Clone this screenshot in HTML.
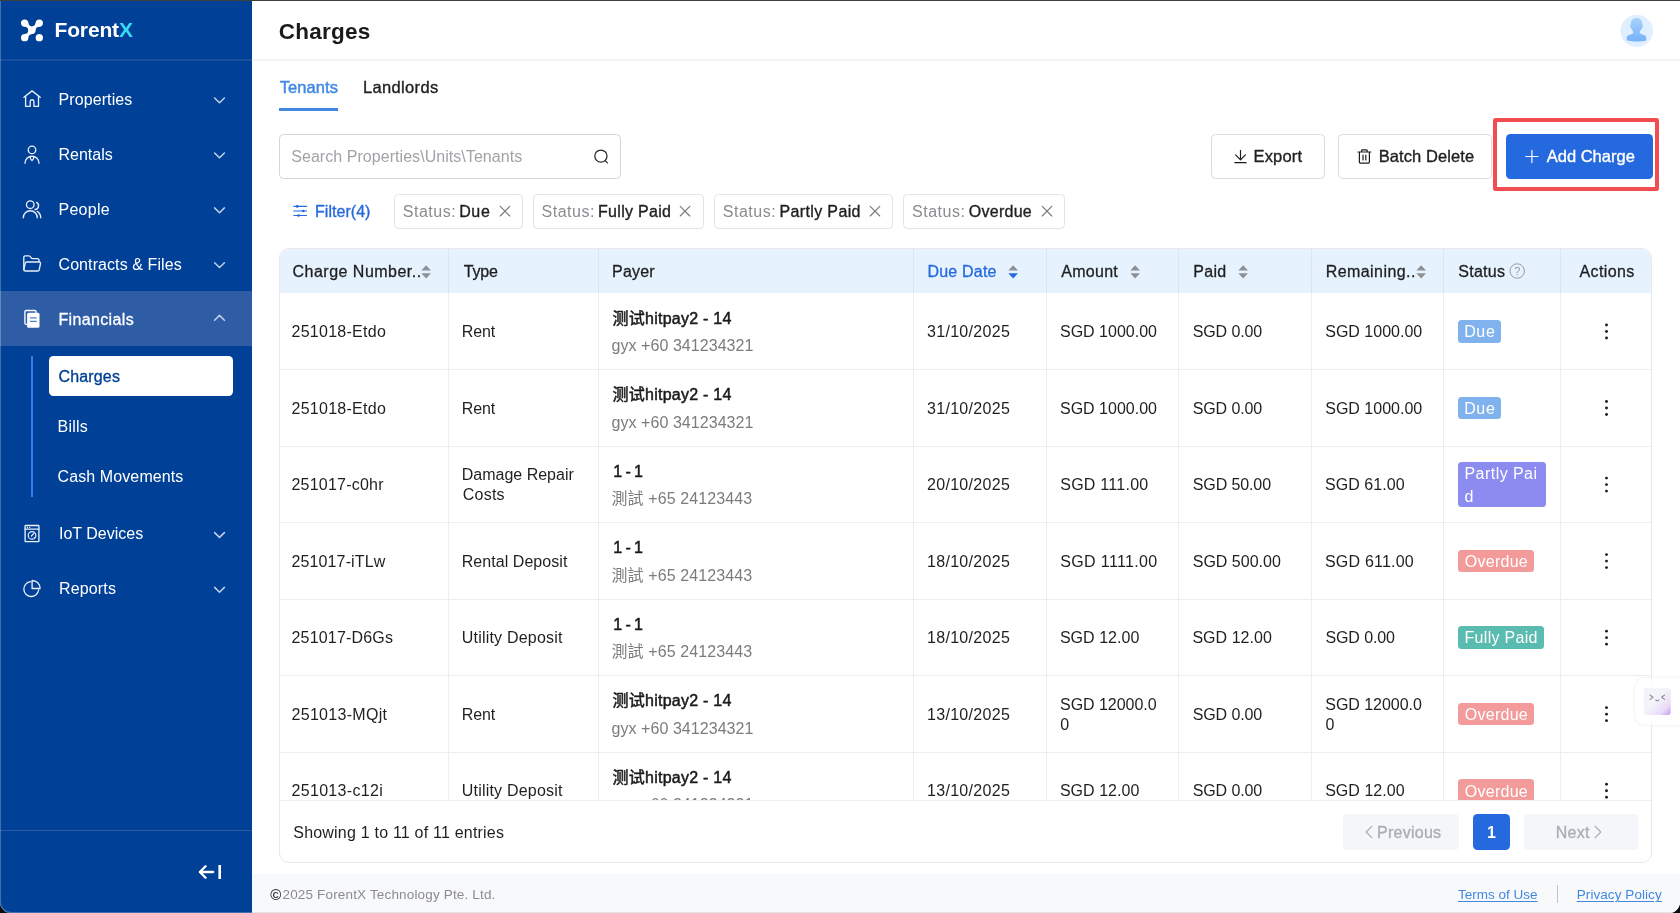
<!DOCTYPE html>
<html lang="en">
<head>
<meta charset="utf-8">
<title>Charges - ForentX</title>
<style>
*{box-sizing:border-box;margin:0;padding:0}
html,body{width:1680px;height:913px;overflow:hidden;background:#0c0c0c}
body{font-family:"Liberation Sans","Noto Sans CJK SC",sans-serif;color:#1f1f21;font-size:16px}
#win{position:absolute;left:0;top:0;width:1680px;height:913px;background:#fff;border-radius:0 0 11px 11px;overflow:hidden;will-change:transform}
#topline{position:absolute;left:0;top:0;width:1680px;height:1px;background:#3f3f3b}
#edge{position:absolute;left:0;top:1px;width:252px;height:912px;border-left:1px solid rgba(255,255,255,.25);border-bottom:1px solid rgba(255,255,255,.25);border-radius:0 0 0 11px;pointer-events:none}
.abs{position:absolute}
.tx{position:absolute;white-space:nowrap}
#side{position:absolute;left:0;top:0;width:251.5px;height:913px;background:#004096;overflow:hidden}
#card{border:1px solid #e9e9ed;border-radius:10px;background:#fff}
#clip{overflow:hidden}
</style>
</head>
<body>
<div id="win">
<div id="side">
<div class="abs" style="left:0px;top:291px;width:251.5px;height:55px;background:#2e5da6"></div>
<div class="abs" style="left:0px;top:59px;width:251.5px;height:2px;background:#1a4f9f"></div>
<div class="abs" style="left:0px;top:829.5px;width:251.5px;height:1px;background:#2b5ba6"></div>
<div class="abs" style="left:31.2px;top:355.5px;width:1.8px;height:141px;background:#2f80ee"></div>
<div class="abs" style="left:49.2px;top:355.5px;width:183.8px;height:40.7px;background:#fff;border-radius:4.5px"></div>
<svg class="abs" style="left:0;top:0" width="252" height="913" viewBox="0 0 252 913" fill="none" stroke="#e9eef8" stroke-width="1.35" stroke-linecap="round" stroke-linejoin="round">
<g fill="#fff" stroke="none">
<circle cx="24.65" cy="23.1" r="3.65"/><circle cx="39.3" cy="23.1" r="3.65"/><circle cx="24.65" cy="37.7" r="3.65"/><circle cx="39.3" cy="37.7" r="3.65"/>
<path d="M24.6 21 L28.2 22.6 C28.4 25 29.9 26.4 31.9 26.4 C33.9 26.4 35.5 25 35.8 22.6 L39.4 21 L40.4 26.5 C37 26.7 35.7 28 35.6 30.4 C35.5 32.6 34.4 33.7 32.3 33.9 C29.7 34.2 28.5 35.3 28.2 38 L23 38 L24.6 34.1 C27 33.9 28.2 32.6 28.2 30.4 C28.2 28.2 27 26.9 24.6 26.6 Z"/>
</g>
<!-- home -->
<path d="M23.9 97.3 L32.05 90.9 L40.2 97.3"/><path d="M25.6 96.4 V106.3 H30.2 V101.6 A1.85 1.85 0 0 1 33.9 101.6 V106.3 H38.5 V96.4"/>
<!-- rentals -->
<circle cx="32" cy="149.9" r="3.75"/><path d="M25 163.2 A7 7 0 0 1 39 163.2"/><path d="M30.4 157 V158.6 L32 160.6 L33.6 158.6 V157" stroke-width="1.2"/>
<!-- people -->
<circle cx="30.25" cy="204.7" r="3.8"/><path d="M23.3 217.7 A7 7 0 0 1 37.3 217.7"/><path d="M36.6 202.4 A3.8 3.8 0 0 1 35 209.5"/><path d="M37.2 211.4 A7.2 7.2 0 0 1 40.7 217.7"/>
<!-- folder -->
<path d="M23.8 269.5 V257.2 A1.4 1.4 0 0 1 25.2 255.8 H29.2 C30.4 255.8 31 258.6 32.6 258.6 H37.6 A1.4 1.4 0 0 1 39 260 V261.6"/><path d="M23.8 269.5 L25.3 263.2 A1.5 1.5 0 0 1 26.8 262 H39.4 A1.2 1.2 0 0 1 40.5 263.4 L39.2 269.8 A1.5 1.5 0 0 1 37.8 271 H25.3 A1.5 1.5 0 0 1 23.8 269.5 Z"/>
<!-- financials -->
<path d="M27.2 324.3 H26.2 A1.3 1.3 0 0 1 24.9 323 V311.8 A1.3 1.3 0 0 1 26.2 310.5 H34.8 A1.3 1.3 0 0 1 36.1 311.8 V312.6" stroke="#fff"/>
<rect x="27.1" y="312.8" width="12.4" height="14.9" rx="1.5" fill="#fff" stroke="none"/><path d="M30.3 317.8 H36.3 M30.3 321.4 H36.3" stroke="#5580c2" stroke-width="1.25"/>
<!-- iot -->
<rect x="25.1" y="525.5" width="13.8" height="16.1" rx="0.6"/><path d="M25.1 529.2 H38.9" stroke-width="1.2"/><circle cx="32.05" cy="535.4" r="3.8" stroke-width="1.2"/><path d="M31.4 536 L33.9 533.4" stroke-width="1.2"/><path d="M27.3 527.4 H27.5 M29.5 527.4 H29.7" stroke-width="1.1"/><circle cx="34.4" cy="537.6" r="0.7" fill="#e9eef8" stroke="none"/>
<!-- reports -->
<path d="M30.6 581.7 A7.4 7.4 0 1 0 38.6 590"/><path d="M32.1 580.5 V588.5 H40.1 A8 8 0 0 0 32.1 580.5 Z"/>
<!-- chevrons -->
<g stroke="#c3d0e8" stroke-width="1.5">
<path d="M214.6 98 L219.5 102.8 L224.4 98"/><path d="M214.6 153 L219.5 157.8 L224.4 153"/><path d="M214.6 207.9 L219.5 212.7 L224.4 207.9"/><path d="M214.6 262.7 L219.5 267.5 L224.4 262.7"/>
<path d="M214.6 320.2 L219.5 315.4 L224.4 320.2"/><path d="M214.6 532.6 L219.5 537.4 L224.4 532.6"/><path d="M214.6 587.4 L219.5 592.2 L224.4 587.4"/>
</g>
<!-- collapse -->
<g stroke="#fff" stroke-width="2.3"><path d="M200 872 H213.2 M205.6 866.2 L199.8 872 L205.6 877.8"/><path d="M219.7 865 V879" stroke-width="2.6" stroke-linecap="butt"/></g>
</svg>
<div class="tx" id="logo" style="left:54.50px;top:17.00px;font-size:21px;line-height:26px;color:#fff;letter-spacing:-0.150px;font-weight:bold;">Forent<b style="color:#38d9f5">X</b></div>
<div class="tx" id="m1" style="left:58.50px;top:90.00px;font-size:16px;line-height:20px;color:#fff;letter-spacing:0.100px;">Properties</div>
<div class="tx" id="m2" style="left:58.50px;top:145.00px;font-size:16px;line-height:20px;color:#fff;letter-spacing:0.000px;">Rentals</div>
<div class="tx" id="m3" style="left:58.50px;top:200.00px;font-size:16px;line-height:20px;color:#fff;letter-spacing:0.270px;">People</div>
<div class="tx" id="m4" style="left:58.50px;top:255.00px;font-size:16px;line-height:20px;color:#fff;letter-spacing:0.084px;">Contracts &amp; Files</div>
<div class="tx" id="m5" style="left:58.50px;top:310.00px;font-size:16px;line-height:20px;color:#fff;letter-spacing:0.350px;-webkit-text-stroke:0.3px #fff;">Financials</div>
<div class="tx" id="s1" style="left:58.50px;top:367.00px;font-size:16px;line-height:20px;color:#004096;letter-spacing:0.150px;-webkit-text-stroke:0.35px #004096;">Charges</div>
<div class="tx" id="s2" style="left:57.50px;top:417.00px;font-size:16px;line-height:20px;color:#fff;letter-spacing:0.225px;">Bills</div>
<div class="tx" id="s3" style="left:57.50px;top:467.00px;font-size:16px;line-height:20px;color:#fff;letter-spacing:0.106px;">Cash Movements</div>
<div class="tx" id="m6" style="left:59.00px;top:524.00px;font-size:16px;line-height:20px;color:#fff;letter-spacing:0.000px;">IoT Devices</div>
<div class="tx" id="m7" style="left:59.00px;top:579.00px;font-size:16px;line-height:20px;color:#fff;letter-spacing:0.150px;">Reports</div>
</div>
<div class="abs" style="left:251.5px;top:59px;width:1428.5px;height:2px;background:#f5f5f5"></div>
<div class="tx" id="h1" style="left:278.75px;top:18.00px;font-size:22.5px;line-height:28px;color:#1a1a1a;letter-spacing:0.227px;font-weight:bold;">Charges</div>
<svg class="abs" style="left:1620px;top:14px" width="34" height="34" viewBox="0 0 34 34"><defs><linearGradient id="ag" x1="0" y1="0" x2="0" y2="1"><stop offset="0" stop-color="#a9d2fe"/><stop offset="1" stop-color="#74b2f9"/></linearGradient><clipPath id="ac"><circle cx="16.7" cy="16.9" r="16.2"/></clipPath></defs><circle cx="16.7" cy="16.9" r="16.2" fill="#e0efff"/><g clip-path="url(#ac)"><path d="M16.5 4 C20 4 22.2 6.5 22.2 9.8 C22.2 10.8 22.8 11.3 22.9 12.2 C23 13.2 21.8 14.2 21 15.6 C20.2 17 19.8 17.3 19.8 18.6 C19.8 19.8 21 20.3 23.2 20.8 C25.6 21.3 26.2 22.6 26.2 24 V26 C26.2 27 22 27.4 16.5 27.4 C11 27.4 6.8 27 6.8 26 V24 C6.8 22.6 7.4 21.3 9.8 20.8 C12 20.3 13.2 19.8 13.2 18.6 C13.2 17.3 12.8 17 12 15.6 C11.2 14.2 10 13.2 10.1 12.2 C10.2 11.3 10.8 10.8 10.8 9.8 C10.8 6.5 13 4 16.5 4 Z" fill="url(#ag)"/></g></svg>
<div class="tx" id="tab1" style="left:279.75px;top:77.00px;font-size:16.5px;line-height:20px;color:#4288e2;letter-spacing:0.068px;-webkit-text-stroke:0.45px #4288e2;">Tenants</div>
<div class="abs" style="left:279.25px;top:108.3px;width:58.75px;height:2.5px;background:#4288e2"></div>
<div class="tx" id="tab2" style="left:363.00px;top:77.00px;font-size:16.5px;line-height:20px;color:#1f1f21;letter-spacing:0.337px;-webkit-text-stroke:0.35px #1f1f21;">Landlords</div>
<div class="abs" style="left:279.25px;top:134.25px;width:342px;height:44.5px;border:1px solid #d5d5db;border-radius:4.5px;background:#fff"></div>
<div class="tx" id="ph" style="left:291.25px;top:147.00px;font-size:16px;line-height:20px;color:#a2a2a7;letter-spacing:0.049px;">Search Properties\Units\Tenants</div>
<svg class="abs" style="left:590px;top:146px" width="22" height="22" viewBox="590 146 22 22" fill="none" stroke="#2b2b2d" stroke-width="1.25" stroke-linecap="round"><circle cx="600.9" cy="156.1" r="6.1"/><path d="M605.2 160.6 L607.4 162.9"/></svg>
<div class="abs" style="left:1210.5px;top:134.25px;width:114px;height:44.5px;border:1px solid #dadae2;border-radius:4.5px;background:#fff"></div>
<svg class="abs" style="left:1230px;top:146px" width="22" height="22" viewBox="1230 146 22 22" fill="none" stroke="#1f1f21" stroke-width="1.2" stroke-linecap="round" stroke-linejoin="round"><path d="M1240.5 150.4 V159.6 M1235.6 154.9 L1240.5 159.8 L1245.4 154.9 M1234.9 162.7 H1246.1"/></svg>
<div class="tx" id="b1" style="left:1253.50px;top:146.00px;font-size:16.5px;line-height:20px;color:#1f1f21;letter-spacing:0.180px;-webkit-text-stroke:0.35px #1f1f21;">Export</div>
<div class="abs" style="left:1338.25px;top:134.25px;width:153.25px;height:44.5px;border:1px solid #dadae2;border-radius:4.5px;background:#fff"></div>
<svg class="abs" style="left:1354px;top:146px" width="22" height="22" viewBox="1354 146 22 22" fill="none" stroke="#1f1f21" stroke-width="1.2" stroke-linecap="round" stroke-linejoin="round"><path d="M1358 152 H1370.8 M1361.6 152 V150.6 A0.8 0.8 0 0 1 1362.4 149.8 H1366.4 A0.8 0.8 0 0 1 1367.2 150.6 V152 M1359.4 152 V162 A1.2 1.2 0 0 0 1360.6 163.2 H1368.2 A1.2 1.2 0 0 0 1369.4 162 V152 M1363 155.2 V160 M1365.8 155.2 V160"/></svg>
<div class="tx" id="b2" style="left:1378.75px;top:146.00px;font-size:16.5px;line-height:20px;color:#1f1f21;letter-spacing:0.082px;-webkit-text-stroke:0.35px #1f1f21;">Batch Delete</div>
<div class="abs" style="left:1505.75px;top:133.75px;width:146.75px;height:45.5px;border-radius:4.5px;background:#2569de"></div>
<svg class="abs" style="left:1520px;top:146px" width="24" height="22" viewBox="1520 146 24 22" fill="none" stroke="#fff" stroke-width="1.2" stroke-linecap="round"><path d="M1531.9 150.4 V162.6 M1525.8 156.5 H1538"/></svg>
<div class="tx" id="b3" style="left:1546.75px;top:146.00px;font-size:16.5px;line-height:20px;color:#fff;letter-spacing:0.000px;-webkit-text-stroke:0.35px #fff;">Add Charge</div>
<div class="abs" style="left:1492.75px;top:118px;width:166.25px;height:72.5px;border:4px solid #f24d50;border-radius:2.5px"></div>
<svg class="abs" style="left:290px;top:202px" width="20" height="20" viewBox="290 202 20 20" fill="none" stroke="#2569de" stroke-width="1.15" stroke-linecap="round"><path d="M293.8 206.4 H306.6 M293.8 211 H306.6 M293.8 215.5 H306.6"/><g fill="#2569de" stroke="none"><circle cx="297.2" cy="206.4" r="1.35"/><circle cx="303.3" cy="211" r="1.35"/><circle cx="298.6" cy="215.5" r="1.35"/></g></svg>
<div class="tx" id="flt" style="left:315.05px;top:202.00px;font-size:16px;line-height:20px;color:#2569de;letter-spacing:0.032px;-webkit-text-stroke:0.35px #2569de;">Filter(4)</div>
<div class="abs" style="left:393.5px;top:193.75px;width:129px;height:35.5px;border:1px solid #e2e2e8;border-radius:4.5px;background:#fff"></div>
<div class="tx" id="c1a" style="left:402.75px;top:202.00px;font-size:16px;line-height:20px;color:#8b8b90;letter-spacing:0.526px;">Status:</div>
<div class="tx" id="c1b" style="left:459.14px;top:202.00px;font-size:16px;line-height:20px;color:#1f1f21;letter-spacing:0.680px;-webkit-text-stroke:0.35px #1f1f21;">Due</div>
<svg class="abs" style="left:496.5px;top:204px" width="16" height="16" viewBox="0 0 16 16" fill="none" stroke="#77777b" stroke-width="1.1" stroke-linecap="round"><path d="M3.2 2.4 L12.8 12 M12.8 2.4 L3.2 12"/></svg>
<div class="abs" style="left:532.5px;top:193.75px;width:171px;height:35.5px;border:1px solid #e2e2e8;border-radius:4.5px;background:#fff"></div>
<div class="tx" id="c2a" style="left:541.50px;top:202.00px;font-size:16px;line-height:20px;color:#8b8b90;letter-spacing:0.526px;">Status:</div>
<div class="tx" id="c2b" style="left:598.00px;top:202.00px;font-size:16px;line-height:20px;color:#1f1f21;letter-spacing:0.300px;-webkit-text-stroke:0.35px #1f1f21;">Fully Paid</div>
<svg class="abs" style="left:677.25px;top:204px" width="16" height="16" viewBox="0 0 16 16" fill="none" stroke="#77777b" stroke-width="1.1" stroke-linecap="round"><path d="M3.2 2.4 L12.8 12 M12.8 2.4 L3.2 12"/></svg>
<div class="abs" style="left:713.5px;top:193.75px;width:179px;height:35.5px;border:1px solid #e2e2e8;border-radius:4.5px;background:#fff"></div>
<div class="tx" id="c3a" style="left:722.75px;top:202.00px;font-size:16px;line-height:20px;color:#8b8b90;letter-spacing:0.526px;">Status:</div>
<div class="tx" id="c3b" style="left:779.50px;top:202.00px;font-size:16px;line-height:20px;color:#1f1f21;letter-spacing:0.360px;-webkit-text-stroke:0.35px #1f1f21;">Partly Paid</div>
<svg class="abs" style="left:866.75px;top:204px" width="16" height="16" viewBox="0 0 16 16" fill="none" stroke="#77777b" stroke-width="1.1" stroke-linecap="round"><path d="M3.2 2.4 L12.8 12 M12.8 2.4 L3.2 12"/></svg>
<div class="abs" style="left:902.5px;top:193.75px;width:162px;height:35.5px;border:1px solid #e2e2e8;border-radius:4.5px;background:#fff"></div>
<div class="tx" id="c4a" style="left:912.00px;top:202.00px;font-size:16px;line-height:20px;color:#8b8b90;letter-spacing:0.526px;">Status:</div>
<div class="tx" id="c4b" style="left:968.83px;top:202.00px;font-size:16px;line-height:20px;color:#1f1f21;letter-spacing:0.250px;-webkit-text-stroke:0.35px #1f1f21;">Overdue</div>
<svg class="abs" style="left:1038.62px;top:204px" width="16" height="16" viewBox="0 0 16 16" fill="none" stroke="#77777b" stroke-width="1.1" stroke-linecap="round"><path d="M3.2 2.4 L12.8 12 M12.8 2.4 L3.2 12"/></svg>
<div class="abs" id="card" style="left:279.25px;top:248px;width:1372.75px;height:615px"></div>
<div class="abs" id="clip" style="left:0px;top:0px;width:1680px;height:800px">
<div class="abs" style="left:280.25px;top:249px;width:1370.75px;height:44.3px;background:#e6f3fe;border-radius:9px 9px 0 0"></div>
<div class="abs" style="left:447.75px;top:249px;width:1px;height:44.3px;background:#d9e6f1"></div>
<div class="abs" style="left:447.75px;top:293.3px;width:1px;height:506.7px;background:#eeeeef"></div>
<div class="abs" style="left:598px;top:249px;width:1px;height:44.3px;background:#d9e6f1"></div>
<div class="abs" style="left:598px;top:293.3px;width:1px;height:506.7px;background:#eeeeef"></div>
<div class="abs" style="left:912.9px;top:249px;width:1px;height:44.3px;background:#d9e6f1"></div>
<div class="abs" style="left:912.9px;top:293.3px;width:1px;height:506.7px;background:#eeeeef"></div>
<div class="abs" style="left:1046px;top:249px;width:1px;height:44.3px;background:#d9e6f1"></div>
<div class="abs" style="left:1046px;top:293.3px;width:1px;height:506.7px;background:#eeeeef"></div>
<div class="abs" style="left:1177.9px;top:249px;width:1px;height:44.3px;background:#d9e6f1"></div>
<div class="abs" style="left:1177.9px;top:293.3px;width:1px;height:506.7px;background:#eeeeef"></div>
<div class="abs" style="left:1310.8px;top:249px;width:1px;height:44.3px;background:#d9e6f1"></div>
<div class="abs" style="left:1310.8px;top:293.3px;width:1px;height:506.7px;background:#eeeeef"></div>
<div class="abs" style="left:1443.3px;top:249px;width:1px;height:44.3px;background:#d9e6f1"></div>
<div class="abs" style="left:1443.3px;top:293.3px;width:1px;height:506.7px;background:#eeeeef"></div>
<div class="abs" style="left:1559.8px;top:249px;width:1px;height:44.3px;background:#d9e6f1"></div>
<div class="abs" style="left:1559.8px;top:293.3px;width:1px;height:506.7px;background:#eeeeef"></div>
<div class="abs" style="left:280.25px;top:369.33px;width:1370.75px;height:1px;background:#eeeeef"></div>
<div class="abs" style="left:280.25px;top:445.86px;width:1370.75px;height:1px;background:#eeeeef"></div>
<div class="abs" style="left:280.25px;top:522.39px;width:1370.75px;height:1px;background:#eeeeef"></div>
<div class="abs" style="left:280.25px;top:598.92px;width:1370.75px;height:1px;background:#eeeeef"></div>
<div class="abs" style="left:280.25px;top:675.45px;width:1370.75px;height:1px;background:#eeeeef"></div>
<div class="abs" style="left:280.25px;top:751.98px;width:1370.75px;height:1px;background:#eeeeef"></div>
<div class="abs" style="left:280.25px;top:828.51px;width:1370.75px;height:1px;background:#eeeeef"></div>
<div class="tx" id="th1" style="left:292.54px;top:262.00px;font-size:16px;line-height:20px;color:#1f1f21;letter-spacing:0.484px;-webkit-text-stroke:0.3px #1f1f21;">Charge Number..</div>
<svg class="abs si" style="left:421.3px;top:264px" width="12" height="16" viewBox="0 0 12 16"><path d="M5.15 1.2 L10 6.6 H0.3 Z" fill="#909094"/><path d="M5.15 14.6 L10 9.2 H0.3 Z" fill="#909094"/></svg>
<div class="tx" id="th2" style="left:463.75px;top:262.00px;font-size:16px;line-height:20px;color:#1f1f21;letter-spacing:-0.150px;-webkit-text-stroke:0.3px #1f1f21;">Type</div>
<div class="tx" id="th3" style="left:612.00px;top:262.00px;font-size:16px;line-height:20px;color:#1f1f21;letter-spacing:0.225px;-webkit-text-stroke:0.3px #1f1f21;">Payer</div>
<div class="tx" id="th4" style="left:927.50px;top:262.00px;font-size:16px;line-height:20px;color:#2569de;letter-spacing:0.189px;-webkit-text-stroke:0.3px #2569de;">Due Date</div>
<svg class="abs si" style="left:1008px;top:264px" width="12" height="16" viewBox="0 0 12 16"><path d="M5.15 1.2 L10 6.6 H0.3 Z" fill="#909094"/><path d="M5.15 14.6 L10 9.2 H0.3 Z" fill="#2569de"/></svg>
<div class="tx" id="th5" style="left:1061.25px;top:262.00px;font-size:16px;line-height:20px;color:#1f1f21;letter-spacing:0.270px;-webkit-text-stroke:0.3px #1f1f21;">Amount</div>
<svg class="abs si" style="left:1130px;top:264px" width="12" height="16" viewBox="0 0 12 16"><path d="M5.15 1.2 L10 6.6 H0.3 Z" fill="#909094"/><path d="M5.15 14.6 L10 9.2 H0.3 Z" fill="#909094"/></svg>
<div class="tx" id="th6" style="left:1193.25px;top:262.00px;font-size:16px;line-height:20px;color:#1f1f21;letter-spacing:0.300px;-webkit-text-stroke:0.3px #1f1f21;">Paid</div>
<svg class="abs si" style="left:1237.5px;top:264px" width="12" height="16" viewBox="0 0 12 16"><path d="M5.15 1.2 L10 6.6 H0.3 Z" fill="#909094"/><path d="M5.15 14.6 L10 9.2 H0.3 Z" fill="#909094"/></svg>
<div class="tx" id="th7" style="left:1325.70px;top:262.00px;font-size:16px;line-height:20px;color:#1f1f21;letter-spacing:0.438px;-webkit-text-stroke:0.3px #1f1f21;">Remaining..</div>
<svg class="abs si" style="left:1415.7px;top:264px" width="12" height="16" viewBox="0 0 12 16"><path d="M5.15 1.2 L10 6.6 H0.3 Z" fill="#909094"/><path d="M5.15 14.6 L10 9.2 H0.3 Z" fill="#909094"/></svg>
<div class="tx" id="th8" style="left:1458.25px;top:262.00px;font-size:16px;line-height:20px;color:#1f1f21;letter-spacing:0.270px;-webkit-text-stroke:0.3px #1f1f21;">Status</div>
<svg class="abs" style="left:1508px;top:262px" width="18" height="18" viewBox="1508 262 18 18" fill="none"><circle cx="1517.2" cy="271" r="7.2" stroke="#98989c" stroke-width="1"/><text x="1517.2" y="275" text-anchor="middle" font-family="Liberation Sans, sans-serif" font-size="11" fill="#98989c">?</text></svg>
<div class="tx" id="th9" style="left:1579.50px;top:262.00px;font-size:16px;line-height:20px;color:#1f1f21;letter-spacing:0.372px;-webkit-text-stroke:0.3px #1f1f21;">Actions</div>
<div class="tx" id="r0a" style="left:291.50px;top:322.00px;font-size:16px;line-height:20px;color:#1f1f21;letter-spacing:0.270px;">251018-Etdo</div>
<div class="tx" id="r0b" style="left:461.75px;top:322.00px;font-size:16px;line-height:20px;color:#1f1f21;letter-spacing:-0.150px;">Rent</div>
<div class="tx" id="r0c" style="left:612.50px;top:309.00px;font-size:16px;line-height:20px;color:#1a1a1a;letter-spacing:0.247px;-webkit-text-stroke:0.5px #1a1a1a;">测试hitpay2 - 14</div>
<div class="tx" id="r0d" style="left:611.50px;top:336.00px;font-size:16px;line-height:20px;color:#7c7c80;letter-spacing:0.056px;">gyx +60 341234321</div>
<div class="tx" id="r0e" style="left:927.00px;top:322.00px;font-size:16px;line-height:20px;color:#1f1f21;letter-spacing:0.300px;">31/10/2025</div>
<div class="tx" id="r0f" style="left:1060.00px;top:322.00px;font-size:16px;line-height:20px;color:#1f1f21;letter-spacing:0.000px;">SGD 1000.00</div>
<div class="tx" id="r0g" style="left:1192.65px;top:322.00px;font-size:16px;line-height:20px;color:#1f1f21;letter-spacing:-0.090px;">SGD 0.00</div>
<div class="tx" id="r0h" style="left:1325.25px;top:322.00px;font-size:16px;line-height:20px;color:#1f1f21;letter-spacing:0.000px;">SGD 1000.00</div>
<div class="abs" style="left:1458.25px;top:320.015px;width:42.75px;height:22.8px;border-radius:3.5px;background:#80b3ee"></div>
<div class="tx" id="r0t" style="left:1464.14px;top:322.00px;font-size:16px;line-height:20px;color:#fff;letter-spacing:0.680px;">Due</div>
<div class="tx" id="r1a" style="left:291.50px;top:399.00px;font-size:16px;line-height:20px;color:#1f1f21;letter-spacing:0.270px;">251018-Etdo</div>
<div class="tx" id="r1b" style="left:461.75px;top:399.00px;font-size:16px;line-height:20px;color:#1f1f21;letter-spacing:-0.150px;">Rent</div>
<div class="tx" id="r1c" style="left:612.50px;top:385.00px;font-size:16px;line-height:20px;color:#1a1a1a;letter-spacing:0.247px;-webkit-text-stroke:0.5px #1a1a1a;">测试hitpay2 - 14</div>
<div class="tx" id="r1d" style="left:611.50px;top:413.00px;font-size:16px;line-height:20px;color:#7c7c80;letter-spacing:0.056px;">gyx +60 341234321</div>
<div class="tx" id="r1e" style="left:927.00px;top:399.00px;font-size:16px;line-height:20px;color:#1f1f21;letter-spacing:0.300px;">31/10/2025</div>
<div class="tx" id="r1f" style="left:1060.00px;top:399.00px;font-size:16px;line-height:20px;color:#1f1f21;letter-spacing:0.000px;">SGD 1000.00</div>
<div class="tx" id="r1g" style="left:1192.65px;top:399.00px;font-size:16px;line-height:20px;color:#1f1f21;letter-spacing:-0.090px;">SGD 0.00</div>
<div class="tx" id="r1h" style="left:1325.25px;top:399.00px;font-size:16px;line-height:20px;color:#1f1f21;letter-spacing:0.000px;">SGD 1000.00</div>
<div class="abs" style="left:1458.25px;top:396.545px;width:42.75px;height:22.8px;border-radius:3.5px;background:#80b3ee"></div>
<div class="tx" id="r1t" style="left:1464.14px;top:399.00px;font-size:16px;line-height:20px;color:#fff;letter-spacing:0.680px;">Due</div>
<div class="tx" id="r2a" style="left:291.50px;top:475.00px;font-size:16px;line-height:20px;color:#1f1f21;letter-spacing:0.212px;">251017-c0hr</div>
<div class="tx" id="r2b" style="left:461.75px;top:465.00px;font-size:16px;line-height:20px;color:#1f1f21;letter-spacing:-0.001px;">Damage Repair</div>
<div class="tx" id="r2b2" style="left:462.75px;top:485.00px;font-size:16px;line-height:20px;color:#1f1f21;letter-spacing:0.225px;">Costs</div>
<div class="tx" id="r2c" style="left:613.25px;top:462.00px;font-size:16px;line-height:20px;color:#1a1a1a;letter-spacing:-0.569px;-webkit-text-stroke:0.5px #1a1a1a;">1 - 1</div>
<div class="tx" id="r2d" style="left:611.50px;top:489.00px;font-size:16px;line-height:20px;color:#7c7c80;letter-spacing:0.096px;">測試 +65 24123443</div>
<div class="tx" id="r2e" style="left:927.00px;top:475.00px;font-size:16px;line-height:20px;color:#1f1f21;letter-spacing:0.300px;">20/10/2025</div>
<div class="tx" id="r2f" style="left:1060.25px;top:475.00px;font-size:16px;line-height:20px;color:#1f1f21;letter-spacing:0.250px;">SGD 111.00</div>
<div class="tx" id="r2g" style="left:1192.75px;top:475.00px;font-size:16px;line-height:20px;color:#1f1f21;letter-spacing:-0.110px;">SGD 50.00</div>
<div class="tx" id="r2h" style="left:1325.00px;top:475.00px;font-size:16px;line-height:20px;color:#1f1f21;letter-spacing:0.056px;">SGD 61.00</div>
<div class="abs" style="left:1458.25px;top:461.675px;width:88px;height:45.6px;border-radius:3.5px;background:#8c8cf0"></div>
<div class="tx" id="r2t" style="left:1464.50px;top:464.00px;font-size:16px;line-height:20px;color:#fff;letter-spacing:0.450px;">Partly Pai</div>
<div class="tx" id="r2t2" style="left:1464.50px;top:487.00px;font-size:16px;line-height:20px;color:#fff;letter-spacing:0.000px;">d</div>
<div class="tx" id="r3a" style="left:291.50px;top:552.00px;font-size:16px;line-height:20px;color:#1f1f21;letter-spacing:0.126px;">251017-iTLw</div>
<div class="tx" id="r3b" style="left:461.75px;top:552.00px;font-size:16px;line-height:20px;color:#1f1f21;letter-spacing:0.051px;">Rental Deposit</div>
<div class="tx" id="r3c" style="left:613.25px;top:538.00px;font-size:16px;line-height:20px;color:#1a1a1a;letter-spacing:-0.569px;-webkit-text-stroke:0.5px #1a1a1a;">1 - 1</div>
<div class="tx" id="r3d" style="left:611.50px;top:566.00px;font-size:16px;line-height:20px;color:#7c7c80;letter-spacing:0.096px;">測試 +65 24123443</div>
<div class="tx" id="r3e" style="left:927.00px;top:552.00px;font-size:16px;line-height:20px;color:#1f1f21;letter-spacing:0.300px;">18/10/2025</div>
<div class="tx" id="r3f" style="left:1060.25px;top:552.00px;font-size:16px;line-height:20px;color:#1f1f21;letter-spacing:0.360px;">SGD 1111.00</div>
<div class="tx" id="r3g" style="left:1192.75px;top:552.00px;font-size:16px;line-height:20px;color:#1f1f21;letter-spacing:0.000px;">SGD 500.00</div>
<div class="tx" id="r3h" style="left:1325.00px;top:552.00px;font-size:16px;line-height:20px;color:#1f1f21;letter-spacing:0.200px;">SGD 611.00</div>
<div class="abs" style="left:1458.25px;top:549.605px;width:75.5px;height:22.8px;border-radius:3.5px;background:#f39a9a"></div>
<div class="tx" id="r3t" style="left:1464.83px;top:552.00px;font-size:16px;line-height:20px;color:#fff;letter-spacing:0.250px;">Overdue</div>
<div class="tx" id="r4a" style="left:291.50px;top:628.00px;font-size:16px;line-height:20px;color:#1f1f21;letter-spacing:0.180px;">251017-D6Gs</div>
<div class="tx" id="r4b" style="left:461.75px;top:628.00px;font-size:16px;line-height:20px;color:#1f1f21;letter-spacing:0.209px;">Utility Deposit</div>
<div class="tx" id="r4c" style="left:613.25px;top:615.00px;font-size:16px;line-height:20px;color:#1a1a1a;letter-spacing:-0.569px;-webkit-text-stroke:0.5px #1a1a1a;">1 - 1</div>
<div class="tx" id="r4d" style="left:611.50px;top:642.00px;font-size:16px;line-height:20px;color:#7c7c80;letter-spacing:0.096px;">測試 +65 24123443</div>
<div class="tx" id="r4e" style="left:927.00px;top:628.00px;font-size:16px;line-height:20px;color:#1f1f21;letter-spacing:0.300px;">18/10/2025</div>
<div class="tx" id="r4f" style="left:1059.92px;top:628.00px;font-size:16px;line-height:20px;color:#1f1f21;letter-spacing:0.028px;">SGD 12.00</div>
<div class="tx" id="r4g" style="left:1192.42px;top:628.00px;font-size:16px;line-height:20px;color:#1f1f21;letter-spacing:0.028px;">SGD 12.00</div>
<div class="tx" id="r4h" style="left:1325.40px;top:628.00px;font-size:16px;line-height:20px;color:#1f1f21;letter-spacing:-0.090px;">SGD 0.00</div>
<div class="abs" style="left:1458.25px;top:626.135px;width:85.25px;height:22.8px;border-radius:3.5px;background:#5abbb0"></div>
<div class="tx" id="r4t" style="left:1464.50px;top:628.00px;font-size:16px;line-height:20px;color:#fff;letter-spacing:0.300px;">Fully Paid</div>
<div class="tx" id="r5a" style="left:291.50px;top:705.00px;font-size:16px;line-height:20px;color:#1f1f21;letter-spacing:0.302px;">251013-MQjt</div>
<div class="tx" id="r5b" style="left:461.75px;top:705.00px;font-size:16px;line-height:20px;color:#1f1f21;letter-spacing:-0.150px;">Rent</div>
<div class="tx" id="r5c" style="left:612.50px;top:691.00px;font-size:16px;line-height:20px;color:#1a1a1a;letter-spacing:0.247px;-webkit-text-stroke:0.5px #1a1a1a;">测试hitpay2 - 14</div>
<div class="tx" id="r5d" style="left:611.50px;top:719.00px;font-size:16px;line-height:20px;color:#7c7c80;letter-spacing:0.056px;">gyx +60 341234321</div>
<div class="tx" id="r5e" style="left:927.00px;top:705.00px;font-size:16px;line-height:20px;color:#1f1f21;letter-spacing:0.300px;">13/10/2025</div>
<div class="tx" id="r5f" style="left:1060.00px;top:695.00px;font-size:16px;line-height:20px;color:#1f1f21;letter-spacing:-0.037px;">SGD 12000.0</div>
<div class="tx" id="r5f2" style="left:1060.25px;top:715.00px;font-size:16px;line-height:20px;color:#1f1f21;letter-spacing:0.000px;">0</div>
<div class="tx" id="r5g" style="left:1192.65px;top:705.00px;font-size:16px;line-height:20px;color:#1f1f21;letter-spacing:-0.090px;">SGD 0.00</div>
<div class="tx" id="r5h" style="left:1325.25px;top:695.00px;font-size:16px;line-height:20px;color:#1f1f21;letter-spacing:-0.037px;">SGD 12000.0</div>
<div class="tx" id="r5h2" style="left:1325.50px;top:715.00px;font-size:16px;line-height:20px;color:#1f1f21;letter-spacing:0.000px;">0</div>
<div class="abs" style="left:1458.25px;top:702.665px;width:75.5px;height:22.8px;border-radius:3.5px;background:#f39a9a"></div>
<div class="tx" id="r5t" style="left:1464.83px;top:705.00px;font-size:16px;line-height:20px;color:#fff;letter-spacing:0.250px;">Overdue</div>
<div class="tx" id="r6a" style="left:291.50px;top:781.00px;font-size:16px;line-height:20px;color:#1f1f21;letter-spacing:0.314px;">251013-c12i</div>
<div class="tx" id="r6b" style="left:461.75px;top:781.00px;font-size:16px;line-height:20px;color:#1f1f21;letter-spacing:0.209px;">Utility Deposit</div>
<div class="tx" id="r6c" style="left:612.50px;top:768.00px;font-size:16px;line-height:20px;color:#1a1a1a;letter-spacing:0.247px;-webkit-text-stroke:0.5px #1a1a1a;">测试hitpay2 - 14</div>
<div class="tx" id="r6d" style="left:611.50px;top:795.00px;font-size:16px;line-height:20px;color:#7c7c80;letter-spacing:0.056px;">gyx +60 341234321</div>
<div class="tx" id="r6e" style="left:927.00px;top:781.00px;font-size:16px;line-height:20px;color:#1f1f21;letter-spacing:0.300px;">13/10/2025</div>
<div class="tx" id="r6f" style="left:1059.92px;top:781.00px;font-size:16px;line-height:20px;color:#1f1f21;letter-spacing:0.028px;">SGD 12.00</div>
<div class="tx" id="r6g" style="left:1192.65px;top:781.00px;font-size:16px;line-height:20px;color:#1f1f21;letter-spacing:-0.090px;">SGD 0.00</div>
<div class="tx" id="r6h" style="left:1325.17px;top:781.00px;font-size:16px;line-height:20px;color:#1f1f21;letter-spacing:0.028px;">SGD 12.00</div>
<div class="abs" style="left:1458.25px;top:779.195px;width:75.5px;height:22.8px;border-radius:3.5px;background:#f39a9a"></div>
<div class="tx" id="r6t" style="left:1464.83px;top:782.00px;font-size:16px;line-height:20px;color:#fff;letter-spacing:0.250px;">Overdue</div>
<svg class="abs" style="left:1600px;top:293px" width="14" height="507" viewBox="1600 293 14 507" fill="#1c1c1e"><circle cx="1606.5" cy="325.02" r="1.45"/><circle cx="1606.5" cy="331.52" r="1.45"/><circle cx="1606.5" cy="338.02" r="1.45"/><circle cx="1606.5" cy="401.55" r="1.45"/><circle cx="1606.5" cy="408.05" r="1.45"/><circle cx="1606.5" cy="414.55" r="1.45"/><circle cx="1606.5" cy="478.08" r="1.45"/><circle cx="1606.5" cy="484.58" r="1.45"/><circle cx="1606.5" cy="491.08" r="1.45"/><circle cx="1606.5" cy="554.61" r="1.45"/><circle cx="1606.5" cy="561.11" r="1.45"/><circle cx="1606.5" cy="567.61" r="1.45"/><circle cx="1606.5" cy="631.14" r="1.45"/><circle cx="1606.5" cy="637.64" r="1.45"/><circle cx="1606.5" cy="644.14" r="1.45"/><circle cx="1606.5" cy="707.67" r="1.45"/><circle cx="1606.5" cy="714.17" r="1.45"/><circle cx="1606.5" cy="720.67" r="1.45"/><circle cx="1606.5" cy="784.20" r="1.45"/><circle cx="1606.5" cy="790.70" r="1.45"/><circle cx="1606.5" cy="797.20" r="1.45"/></svg>
</div>
<div class="abs" style="left:280.25px;top:799.5px;width:1370.75px;height:1px;background:#eeeeef"></div>
<div class="tx" id="show" style="left:293.25px;top:823.00px;font-size:16px;line-height:20px;color:#1f1f21;letter-spacing:0.209px;">Showing 1 to 11 of 11 entries</div>
<div class="abs" style="left:1343.25px;top:813.75px;width:115.75px;height:36.25px;background:#f5f6fa;border-radius:4.5px"></div>
<svg class="abs" style="left:1362px;top:823px" width="14" height="18" viewBox="1362 823 14 18" fill="none" stroke="#abadb4" stroke-width="1.2" stroke-linecap="round" stroke-linejoin="round"><path d="M1371.8 826.3 L1366.2 832 L1371.8 837.7"/></svg>
<div class="tx" id="prev" style="left:1377.00px;top:823.00px;font-size:16px;line-height:20px;color:#abadb4;letter-spacing:0.257px;-webkit-text-stroke:0.35px #abadb4;">Previous</div>
<div class="abs" style="left:1473px;top:813.5px;width:36.5px;height:36.5px;background:#2569de;border-radius:4.5px"></div>
<div class="tx" id="pg1" style="left:1487.10px;top:823.00px;font-size:16px;line-height:20px;color:#fff;letter-spacing:0.000px;font-weight:bold;">1</div>
<div class="abs" style="left:1523.75px;top:813.75px;width:113.75px;height:36.25px;background:#f5f6fa;border-radius:4.5px"></div>
<div class="tx" id="next" style="left:1555.75px;top:823.00px;font-size:16px;line-height:20px;color:#abadb4;letter-spacing:0.300px;-webkit-text-stroke:0.35px #abadb4;">Next</div>
<svg class="abs" style="left:1590px;top:823px" width="14" height="18" viewBox="1590 823 14 18" fill="none" stroke="#abadb4" stroke-width="1.2" stroke-linecap="round" stroke-linejoin="round"><path d="M1595.2 826.3 L1600.8 832 L1595.2 837.7"/></svg>
<div class="abs" style="left:1634.5px;top:678px;width:60px;height:46.5px;border-radius:10px;background:rgba(255,255,255,.82);box-shadow:0 0 3px rgba(0,0,0,.10)"></div>
<svg class="abs" style="left:1643px;top:687px" width="29" height="29" viewBox="0 0 29 29"><defs><linearGradient id="wg" x1="0.45" y1="0.45" x2="1" y2="1"><stop offset="0" stop-color="#f3f4fa"/><stop offset="0.6" stop-color="#e9dcf8"/><stop offset="1" stop-color="#c49af0"/></linearGradient></defs><rect x="0.7" y="0.9" width="27" height="27" rx="3" fill="url(#wg)"/><g fill="none" stroke="#8d8f9c" stroke-width="1.1" stroke-linecap="round" stroke-linejoin="round"><path d="M7 8 L10 10.2 L7 12.4"/><path d="M21.6 8 L18.6 10.2 L21.6 12.4"/><path d="M12.8 13 Q14.3 14.6 15.8 13"/></g></svg>
<div class="abs" style="left:251.5px;top:874.3px;width:1428.5px;height:38.7px;background:#f8f9fb"></div>
<div class="abs" style="left:251.5px;top:912px;width:1428.5px;height:1px;background:#e4e4e6"></div>
<div class="tx" id="cp" style="left:270.25px;top:885.00px;font-size:15px;line-height:20px;color:#3a3a3c;letter-spacing:0.000px;font-weight:bold;">©</div>
<div class="tx" id="ft" style="left:282.50px;top:885.00px;font-size:13.5px;line-height:20px;color:#8c8c90;letter-spacing:0.162px;">2025 ForentX Technology Pte. Ltd.</div>
<div class="tx" id="tou" style="left:1458.00px;top:885.00px;font-size:13.5px;line-height:20px;color:#4288e2;letter-spacing:0.000px;text-decoration:underline;text-underline-offset:1.5px;text-decoration-thickness:1px;">Terms of Use</div>
<div class="abs" style="left:1556.5px;top:884.5px;width:1px;height:18px;background:#c4c4c6"></div>
<div class="tx" id="pp" style="left:1576.75px;top:885.00px;font-size:13.5px;line-height:20px;color:#4288e2;letter-spacing:0.069px;text-decoration:underline;text-underline-offset:1.5px;text-decoration-thickness:1px;">Privacy Policy</div>
<div id="edge"></div>
<div id="topline"></div>
</div>
</body>
</html>
